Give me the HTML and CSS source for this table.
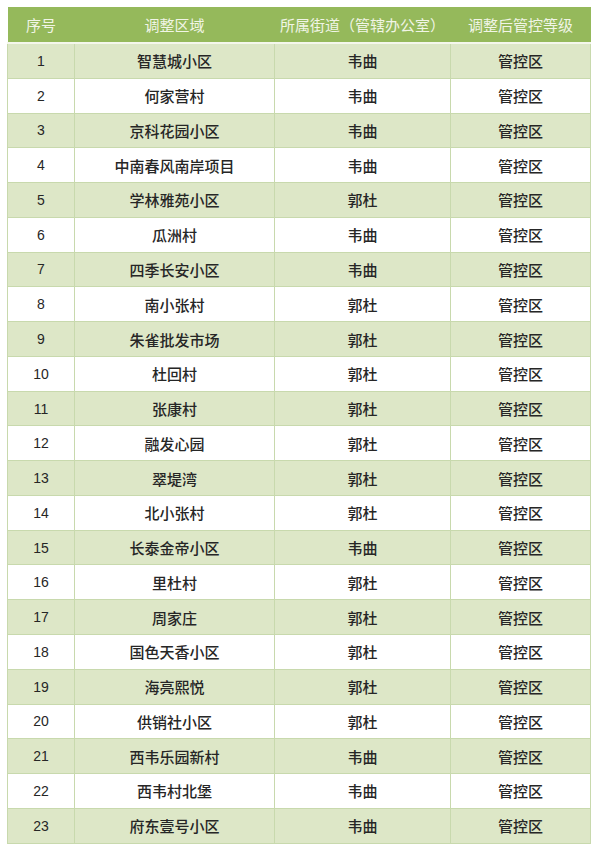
FILE: index.html
```html
<!DOCTYPE html>
<html lang="zh">
<head>
<meta charset="utf-8">
<link rel="stylesheet" href="styles.css">
</head>
<body>
<table class="tbl">
<colgroup><col class="c1"><col class="c2"><col class="c3"><col class="c4"></colgroup>
<thead>
<tr><th>序号</th><th>调整区域</th><th>所属街道（管辖办公室）</th><th>调整后管控等级</th></tr>
</thead>
<tbody>
<tr><td class="n">1</td><td>智慧城小区</td><td>韦曲</td><td>管控区</td></tr>
<tr><td class="n">2</td><td>何家营村</td><td>韦曲</td><td>管控区</td></tr>
<tr><td class="n">3</td><td>京科花园小区</td><td>韦曲</td><td>管控区</td></tr>
<tr><td class="n">4</td><td>中南春风南岸项目</td><td>韦曲</td><td>管控区</td></tr>
<tr><td class="n">5</td><td>学林雅苑小区</td><td>郭杜</td><td>管控区</td></tr>
<tr><td class="n">6</td><td>瓜洲村</td><td>韦曲</td><td>管控区</td></tr>
<tr><td class="n">7</td><td>四季长安小区</td><td>韦曲</td><td>管控区</td></tr>
<tr><td class="n">8</td><td>南小张村</td><td>郭杜</td><td>管控区</td></tr>
<tr><td class="n">9</td><td>朱雀批发市场</td><td>郭杜</td><td>管控区</td></tr>
<tr><td class="n">10</td><td>杜回村</td><td>郭杜</td><td>管控区</td></tr>
<tr><td class="n">11</td><td>张康村</td><td>郭杜</td><td>管控区</td></tr>
<tr><td class="n">12</td><td>融发心园</td><td>郭杜</td><td>管控区</td></tr>
<tr><td class="n">13</td><td>翠堤湾</td><td>郭杜</td><td>管控区</td></tr>
<tr><td class="n">14</td><td>北小张村</td><td>郭杜</td><td>管控区</td></tr>
<tr><td class="n">15</td><td>长泰金帝小区</td><td>韦曲</td><td>管控区</td></tr>
<tr><td class="n">16</td><td>里杜村</td><td>郭杜</td><td>管控区</td></tr>
<tr><td class="n">17</td><td>周家庄</td><td>郭杜</td><td>管控区</td></tr>
<tr><td class="n">18</td><td>国色天香小区</td><td>郭杜</td><td>管控区</td></tr>
<tr><td class="n">19</td><td>海亮熙悦</td><td>郭杜</td><td>管控区</td></tr>
<tr><td class="n">20</td><td>供销社小区</td><td>郭杜</td><td>管控区</td></tr>
<tr><td class="n">21</td><td>西韦乐园新村</td><td>韦曲</td><td>管控区</td></tr>
<tr><td class="n">22</td><td>西韦村北堡</td><td>韦曲</td><td>管控区</td></tr>
<tr><td class="n">23</td><td>府东壹号小区</td><td>韦曲</td><td>管控区</td></tr>
</tbody>
</table>
</body>
</html>
```
FILE: styles.css
```css
html, body { margin: 0; padding: 0; background: #ffffff; }
body { padding: 7px 0 0 7px; font-family: "Noto Sans CJK SC", "Liberation Sans", sans-serif; }
.tbl {
  border-collapse: collapse;
  table-layout: fixed;
  width: 583px;
}
.c1 { width: 67px; }
.c2 { width: 200px; }
.c3 { width: 176px; }
.c4 { width: 140px; }
.tbl th {
  height: 35px;
  padding: 0;
  background: #95b95b;
  color: #f1f5e6;
  font-size: 15px;
  font-weight: normal;
  text-align: center;
  vertical-align: middle;
  border-bottom: 2px solid #f4f7ec;
}
.tbl td {
  height: 33.78px;
  padding: 0;
  text-align: center;
  vertical-align: middle;
  font-size: 15px;
  font-weight: 500;
  color: #262626;
  border: 1px solid #c8d9ad;
  line-height: 1;
}
.tbl tbody tr:nth-child(odd) td { background: #dde7c7; }
.tbl tbody tr:nth-child(even) td { background: #ffffff; }
.tbl td.n { font-family: "Liberation Sans", Arial, sans-serif; font-size: 14px; font-weight: normal; }
```
